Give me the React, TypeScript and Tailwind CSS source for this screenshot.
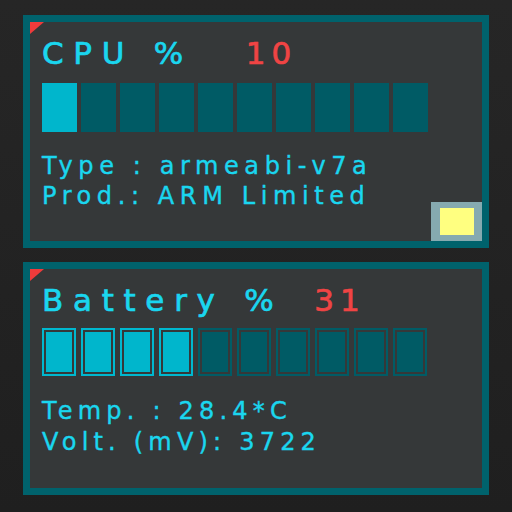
import React from 'react';

const font = { fontFamily: '"DejaVu Sans", "Liberation Sans", sans-serif' };

const Corner = () => (
  <div className="absolute left-0 top-0 w-[14px] h-[12px] bg-[#ef3b3b] [clip-path:polygon(0_0,100%_0,0_100%)]" />
);

const CpuBars = ({ value }: { value: number }) => (
  <div className="flex gap-[4px] mt-[10px]">
    {Array.from({ length: 10 }).map((_, i) => (
      <div
        key={i}
        className={
          'w-[35px] h-[49px] ' + (i < Math.ceil(value / 10) ? 'bg-[#00b6cc]' : 'bg-[#005b65]')
        }
      />
    ))}
  </div>
);

const BatteryBars = ({ value }: { value: number }) => (
  <div className="flex gap-[5px] mt-[8px]">
    {Array.from({ length: 10 }).map((_, i) => {
      const on = i < Math.ceil(value / 10);
      return (
        <div
          key={i}
          className={
            'w-[34px] h-[48px] p-[2px] border-2 ' +
            (on ? 'border-[#00b8cf]' : 'border-[#005c66]')
          }
        >
          <div className={'w-full h-full ' + (on ? 'bg-[#00b6cc]' : 'bg-[#005b65]')} />
        </div>
      );
    })}
  </div>
);

const Card = ({
  children,
  title,
  value,
  valueGap,
}: {
  children: React.ReactNode;
  title: string;
  value: string;
  valueGap: string;
}) => (
  <div className="border-[7px] border-[#00626c] bg-[#353839] h-[233px]">
    <div className="relative h-full px-[12px] pt-[11px]">
      <Corner />
      <div className="flex items-baseline text-[31px] leading-[40px] tracking-[9.7px] [-webkit-text-stroke:0.7px_currentColor]">
        <span className="text-[#1ad6ef]">{title}</span>
        <span className={'text-[#f04444] tracking-[6px] ' + valueGap}>{value}</span>
      </div>
      {children}
    </div>
  </div>
);

export default function App() {
  return (
    <div
      className="w-[512px] h-[512px] bg-gradient-to-b from-[#262626] to-[#1f1f1f] px-[23px] pt-[15px] flex flex-col gap-[14px]"
      style={font}
    >
      <Card title="CPU %" value="10" valueGap="ml-[53px]">
        <CpuBars value={10} />
        <div className="mt-[19px] text-[#1ad6ef] text-[24px] leading-[30px] tracking-[5.6px] [-webkit-text-stroke:0.4px_#1ad6ef]">
          <div>Type : armeabi-v7a</div>
          <div>Prod.: ARM Limited</div>
        </div>
        <div className="absolute right-0 bottom-0 w-[51px] h-[39px] bg-[#86aab0] flex items-center justify-center">
          <div className="w-[34px] h-[27px] bg-[#ffff80]" />
        </div>
      </Card>
      <Card title="Battery %" value="31" valueGap="ml-[31px]">
        <BatteryBars value={31} />
        <div className="mt-[20px] text-[#1ad6ef] text-[24px] leading-[31px] tracking-[5.2px] [-webkit-text-stroke:0.4px_#1ad6ef]">
          <div>Temp. : 28.4*C</div>
          <div>Volt. (mV): 3722</div>
        </div>
      </Card>
    </div>
  );
}
